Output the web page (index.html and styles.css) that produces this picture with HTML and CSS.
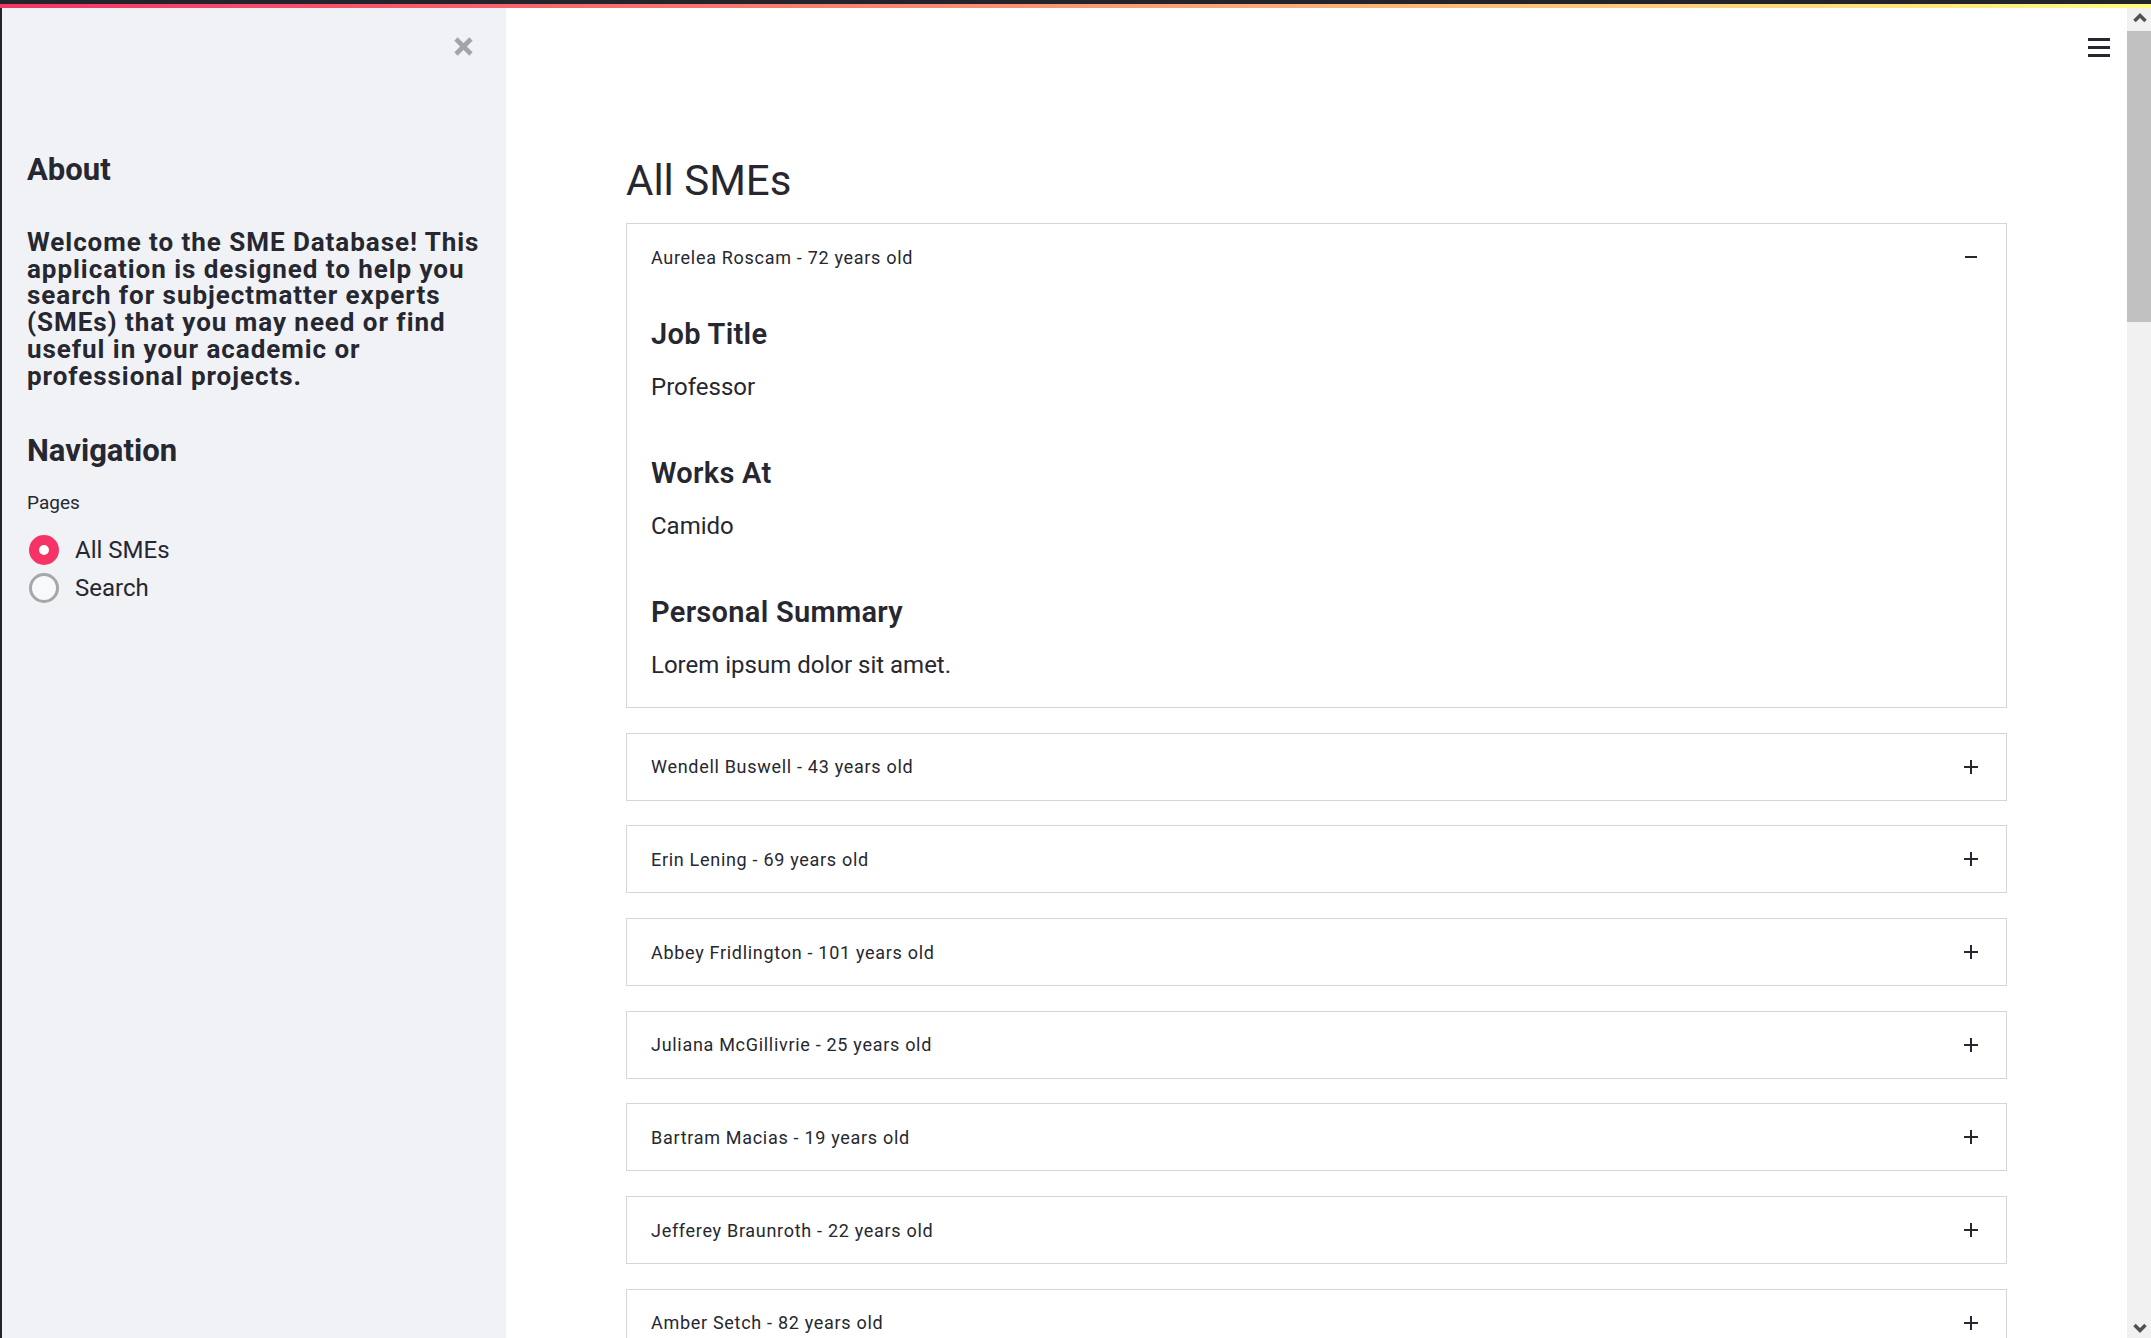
FILE: index.html
```html
<!DOCTYPE html>
<html lang="en">
<head>
<meta charset="utf-8">
<title>SME Database</title>
<link rel="stylesheet" href="styles.css">
</head>
<body>
<div class="app">
  <div class="chrome-top"></div>
  <div class="decoration"></div>
  <div class="shell">
    <aside class="sidebar">
      <div class="sb-head">
        <button class="close-btn" aria-label="Close sidebar">
          <svg width="21" height="21" viewBox="0 0 21 21"><path d="M3 3L18 18M18 3L3 18" stroke="#a3a3a8" stroke-width="4.6" fill="none"/></svg>
        </button>
      </div>
      <h2 class="sb-h about-h">About</h2>
      <p class="sb-intro">Welcome to the SME Database! This<br>application is designed to help you<br>search for subjectmatter experts<br>(SMEs) that you may need or find<br>useful in your academic or<br>professional projects.</p>
      <h2 class="sb-h nav-h">Navigation</h2>
      <div class="radio-label">Pages</div>
      <div class="radio-group">
        <label class="radio checked"><span class="dot"></span><span class="radio-text">All SMEs</span></label>
        <label class="radio"><span class="dot"></span><span class="radio-text">Search</span></label>
      </div>
    </aside>
    <main class="main">
      <header class="toolbar">
        <svg class="hamburger" width="22" height="19" viewBox="0 0 22 19"><rect x="0" y="0" width="22" height="3" fill="#262730"/><rect x="0" y="8" width="22" height="3" fill="#262730"/><rect x="0" y="16" width="22" height="3" fill="#262730"/></svg>
      </header>
      <section class="content">
        <h1 class="title">All SMEs</h1>
        <div class="list">
          <div class="exp open">
            <div class="exp-head"><span class="exp-label">Aurelea Roscam - 72 years old</span><svg class="exp-icon" width="14" height="14" viewBox="0 0 14 14"><rect x="1" y="6" width="12" height="2" fill="#262730"/></svg></div>
            <div class="exp-body">
              <div class="field"><h3 class="field-h">Job Title</h3><p class="field-v">Professor</p></div>
              <div class="field"><h3 class="field-h">Works At</h3><p class="field-v">Camido</p></div>
              <div class="field"><h3 class="field-h">Personal Summary</h3><p class="field-v">Lorem ipsum dolor sit amet.</p></div>
            </div>
          </div>
          <div class="exp"><div class="exp-head"><span class="exp-label">Wendell Buswell - 43 years old</span><svg class="exp-icon" width="14" height="14" viewBox="0 0 14 14"><path d="M0 7H14M7 0V14" stroke="#262730" stroke-width="2"/></svg></div></div>
          <div class="exp"><div class="exp-head"><span class="exp-label">Erin Lening - 69 years old</span><svg class="exp-icon" width="14" height="14" viewBox="0 0 14 14"><path d="M0 7H14M7 0V14" stroke="#262730" stroke-width="2"/></svg></div></div>
          <div class="exp"><div class="exp-head"><span class="exp-label">Abbey Fridlington - 101 years old</span><svg class="exp-icon" width="14" height="14" viewBox="0 0 14 14"><path d="M0 7H14M7 0V14" stroke="#262730" stroke-width="2"/></svg></div></div>
          <div class="exp"><div class="exp-head"><span class="exp-label">Juliana McGillivrie - 25 years old</span><svg class="exp-icon" width="14" height="14" viewBox="0 0 14 14"><path d="M0 7H14M7 0V14" stroke="#262730" stroke-width="2"/></svg></div></div>
          <div class="exp"><div class="exp-head"><span class="exp-label">Bartram Macias - 19 years old</span><svg class="exp-icon" width="14" height="14" viewBox="0 0 14 14"><path d="M0 7H14M7 0V14" stroke="#262730" stroke-width="2"/></svg></div></div>
          <div class="exp"><div class="exp-head"><span class="exp-label">Jefferey Braunroth - 22 years old</span><svg class="exp-icon" width="14" height="14" viewBox="0 0 14 14"><path d="M0 7H14M7 0V14" stroke="#262730" stroke-width="2"/></svg></div></div>
          <div class="exp"><div class="exp-head"><span class="exp-label">Amber Setch - 82 years old</span><svg class="exp-icon" width="14" height="14" viewBox="0 0 14 14"><path d="M0 7H14M7 0V14" stroke="#262730" stroke-width="2"/></svg></div></div>
        </div>
      </section>
    </main>
    <div class="scrollbar">
      <div class="sb-btn"><svg width="24" height="23" viewBox="0 0 24 23"><path d="M7.5 13L13 7.5L18.5 13" stroke="#505050" stroke-width="3.5" fill="none"/></svg></div>
      <div class="sb-thumb"></div>
      <div class="sb-track"></div>
      <div class="sb-btn"><svg width="24" height="23" viewBox="0 0 24 23"><path d="M7.5 10L13 15.5L18.5 10" stroke="#505050" stroke-width="3.5" fill="none"/></svg></div>
    </div>
  </div>
</div>
</body>
</html>
```

FILE: styles.css
```css
* { box-sizing: border-box; }

html, body {
  margin: 0;
  padding: 0;
  height: 100%;
  overflow: hidden;
}

body {
  font-family: "Roboto", "Liberation Sans", sans-serif;
  color: #262730;
  background: #ffffff;
}

.app {
  display: flex;
  flex-direction: column;
  height: 100vh;
}

.chrome-top {
  height: 4px;
  background: #22232b;
  flex-shrink: 0;
}

.decoration {
  height: 4px;
  flex-shrink: 0;
  background: linear-gradient(90deg, #f63366, #fffd80);
}

.shell {
  flex: 1;
  min-height: 0;
  display: flex;
  border-left: 2px solid #22232b;
}

/* Sidebar */
.sidebar {
  width: 504px;
  flex-shrink: 0;
  background: #f0f2f6;
  padding: 0 25px;
}

.sb-head {
  display: flex;
  justify-content: flex-end;
  padding-top: 28px;
  padding-right: 7px;
}

.close-btn {
  width: 21px;
  height: 21px;
  padding: 0;
  border: 0;
  background: none;
  display: block;
}

.close-btn svg { display: block; }

.sb-h {
  margin: 0;
  font-size: 31px;
  line-height: 37px;
  font-weight: 700;
}

.about-h { margin-top: 94px; }

.sb-intro {
  margin: 41px 0 0;
  font-size: 26px;
  line-height: 26.7px;
  font-weight: 700;
  letter-spacing: 0.95px;
}

.nav-h { margin-top: 43px; }

.radio-label {
  margin-top: 22px;
  font-size: 19px;
  line-height: 24px;
}

.radio-group {
  margin-top: 16px;
  display: flex;
  flex-direction: column;
}

.radio {
  height: 38px;
  display: flex;
  align-items: center;
  gap: 16px;
  padding-left: 2px;
  font-size: 24px;
}

.dot {
  width: 30px;
  height: 30px;
  border-radius: 50%;
  border: 3px solid #a6a6ab;
  background: #f8f9fb;
  flex-shrink: 0;
}

.radio.checked .dot {
  border: 10px solid #f63366;
  background: #ffffff;
}

/* Main */
.main {
  flex: 1;
  min-width: 0;
  overflow: hidden;
}

.toolbar {
  display: flex;
  justify-content: flex-end;
  padding: 30px 17px 0 0;
}

.hamburger { display: block; }

.content {
  padding: 0 120px;
}

.title {
  margin: 99px 0 0;
  font-size: 42px;
  line-height: 50px;
  font-weight: 400;
}

.list {
  margin-top: 17px;
  display: flex;
  flex-direction: column;
  gap: 24.7px;
}

.exp {
  border: 1px solid #d6d6d9;
  background: #ffffff;
}

.exp-head {
  height: 66px;
  display: flex;
  align-items: center;
  justify-content: space-between;
  padding: 0 28px 0 24px;
}

.exp-label {
  font-size: 18px;
  letter-spacing: 0.7px;
}

.exp-icon { display: block; }

.exp-body {
  padding: 27px 24px 24px;
}

.field + .field { margin-top: 51px; }

.field-h {
  margin: 0 0 17px;
  font-size: 29px;
  line-height: 35px;
  font-weight: 600;
  letter-spacing: 0.3px;
}

.field-v {
  margin: 0;
  font-size: 24px;
  line-height: 36px;
}

/* Scrollbar */
.scrollbar {
  width: 24px;
  flex-shrink: 0;
  background: #f1f1f1;
  display: flex;
  flex-direction: column;
}

.sb-btn {
  height: 23px;
  flex-shrink: 0;
}

.sb-btn svg { display: block; }

.sb-thumb {
  height: 291px;
  background: #c1c1c1;
  flex-shrink: 0;
}

.sb-track { flex: 1; }
```
